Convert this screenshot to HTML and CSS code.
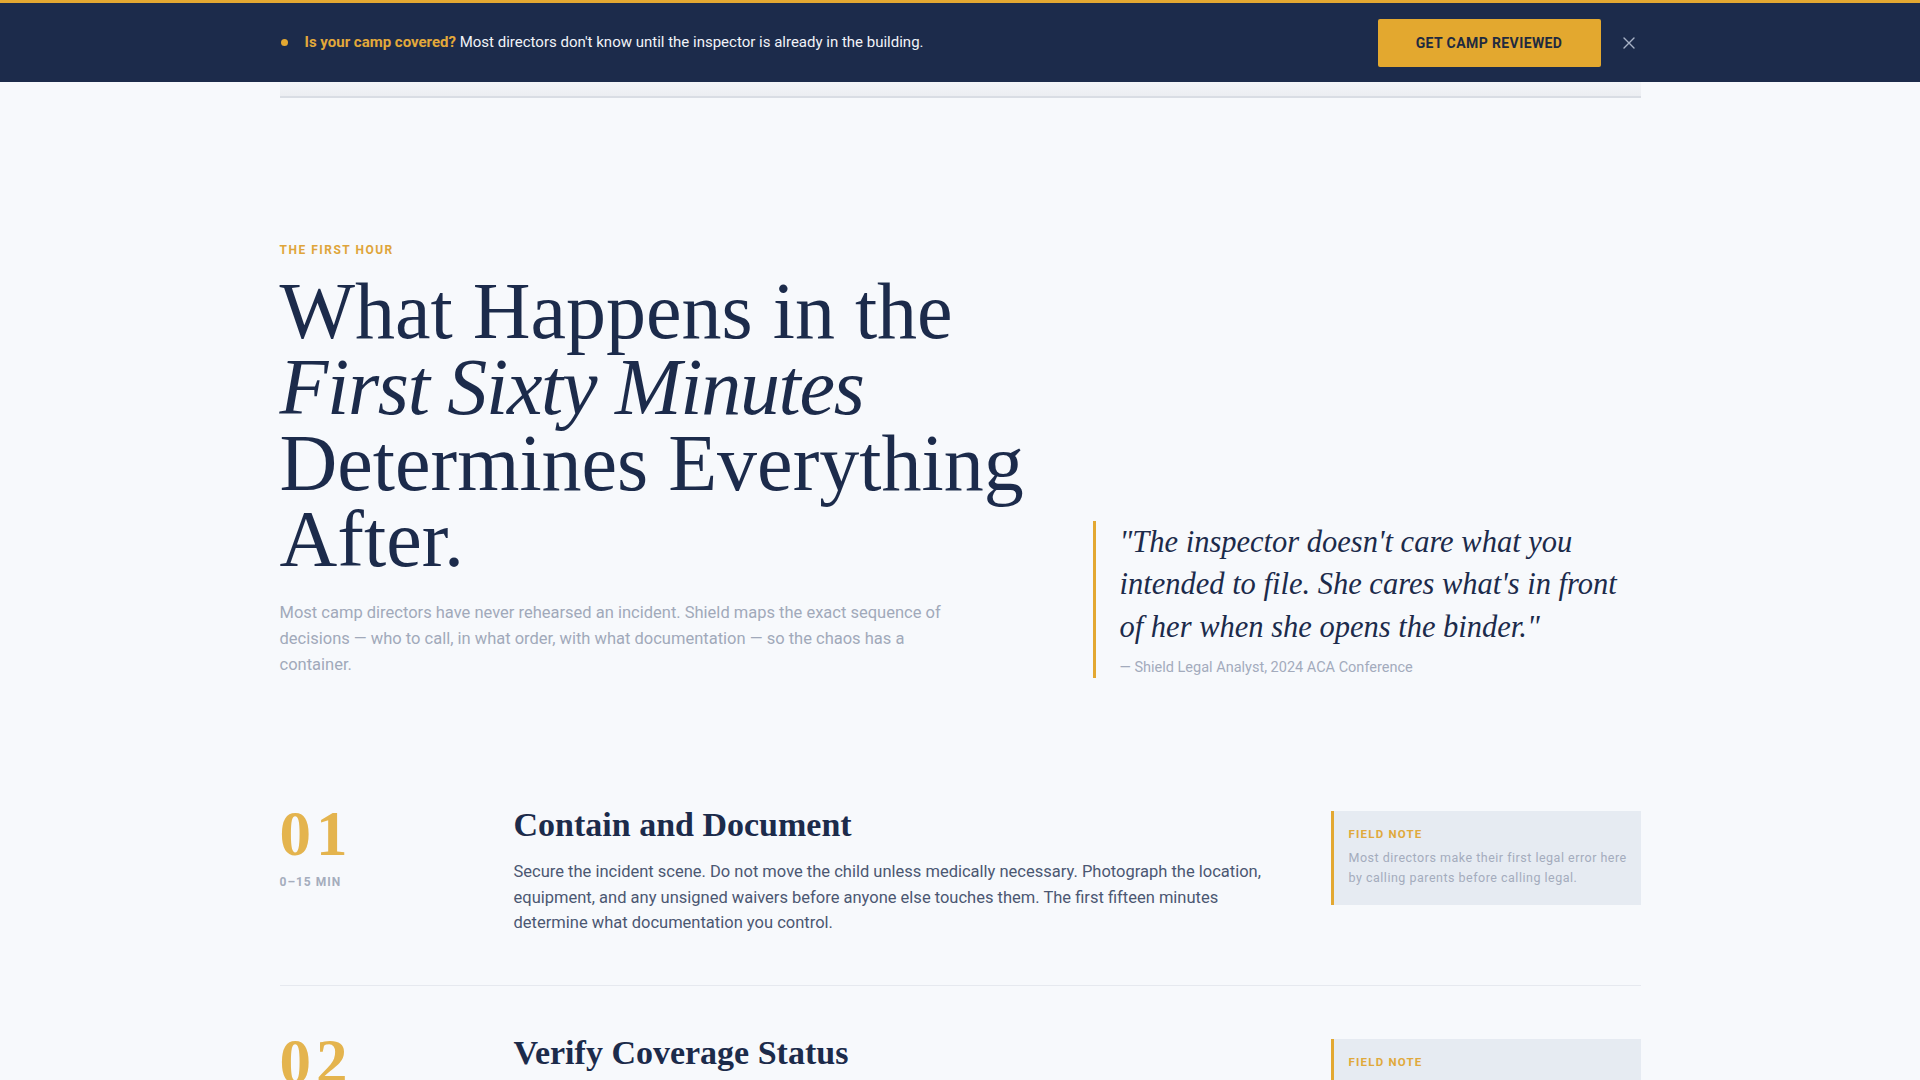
FILE: index.html
```html
<!DOCTYPE html>
<html lang="en">
<head>
<meta charset="utf-8">
<title>The First Hour — Shield</title>
<link rel="stylesheet" href="styles.css">
</head>
<body>
  <div class="announce">
    <div class="wrap announce-inner">
      <p class="announce-text"><span class="dot"></span><strong>Is your camp covered?</strong> Most directors don't know until the inspector is already in the building.</p>
      <div class="announce-actions">
        <a class="btn-gold" href="#">GET CAMP REVIEWED</a>
        <button class="close" type="button" aria-label="Dismiss">
          <svg viewBox="0 0 12 12" width="12" height="12" aria-hidden="true"><path d="M1 1 L11 11 M11 1 L1 11" stroke="currentColor" stroke-width="1.4" stroke-linecap="round" fill="none"/></svg>
        </button>
      </div>
    </div>
  </div>
  <div class="wrap nav-edge"></div>

  <main>
    <section class="wrap hero">
      <div class="hero-main">
        <p class="eyebrow">THE FIRST HOUR</p>
        <h1 class="hero-title"><span class="line">What Happens in the</span><span class="line"><em>First Sixty Minutes</em></span><span class="line">Determines Everything</span><span class="line">After.</span></h1>
        <p class="lede">Most camp directors have never rehearsed an incident. Shield maps the exact sequence of decisions — who to call, in what order, with what documentation — so the chaos has a container.</p>
      </div>
      <blockquote class="pull">
        <p class="pull-text">"The inspector doesn't care what you intended to file. She cares what's in front of her when she opens the binder."</p>
        <cite class="pull-cite">— Shield Legal Analyst, 2024 ACA Conference</cite>
      </blockquote>
    </section>

    <section class="wrap steps">
      <article class="step">
        <div class="step-num">
          <span class="num">01</span>
          <span class="time">0–15 MIN</span>
        </div>
        <div class="step-body">
          <h2 class="step-title">Contain and Document</h2>
          <p class="step-text">Secure the incident scene. Do not move the child unless medically necessary. Photograph the location, equipment, and any unsigned waivers before anyone else touches them. The first fifteen minutes determine what documentation you control.</p>
        </div>
        <aside class="note">
          <span class="note-label">FIELD NOTE</span>
          <p class="note-text">Most directors make their first legal error here by calling parents before calling legal.</p>
        </aside>
      </article>

      <article class="step">
        <div class="step-num">
          <span class="num">02</span>
          <span class="time">15–30 MIN</span>
        </div>
        <div class="step-body">
          <h2 class="step-title">Verify Coverage Status</h2>
          <p class="step-text">Pull the current certificate of insurance and confirm the policy period, the named insureds, and any activity exclusions. If the incident falls outside a listed activity, you need to know before the first phone call.</p>
        </div>
        <aside class="note">
          <span class="note-label">FIELD NOTE</span>
          <p class="note-text">Lapsed riders are the most common surprise. Check the endorsement page, not the summary.</p>
        </aside>
      </article>
    </section>
  </main>
</body>
</html>
```

FILE: styles.css
```css
* {
  box-sizing: border-box;
}

html,
body {
  margin: 0;
  padding: 0;
}

body {
  background: #f7f9fc;
  color: #1c2b4b;
  font-family: Roboto, "Noto Sans", Arial, sans-serif;
  -webkit-font-smoothing: antialiased;
}

.wrap {
  width: 1361px;
  margin: 0 auto;
}

/* ---------- announcement bar ---------- */
.announce {
  background: #1c2b4b;
  border-top: 3px solid #e3a832;
}

.announce-inner {
  height: 79px;
  display: flex;
  align-items: center;
  justify-content: space-between;
}

.announce-text {
  margin: 0 0 1px;
  display: flex;
  align-items: center;
  font-size: 15px;
  font-weight: 400;
  color: #f1f3f8;
  white-space: pre;
}

.announce-text strong {
  color: #e3a93a;
  font-weight: 700;
}

.dot {
  width: 7px;
  height: 7px;
  border-radius: 50%;
  background: #e3a832;
  margin: 0 17px 0 1px;
}

.announce-actions {
  display: flex;
  align-items: center;
}

.btn-gold {
  display: flex;
  align-items: center;
  justify-content: center;
  width: 223px;
  height: 48px;
  background: #e3a82f;
  border-radius: 2px;
  color: #1f2a3f;
  font-size: 14px;
  font-weight: 700;
  letter-spacing: 0.4px;
  text-decoration: none;
}

.close {
  width: 24px;
  height: 24px;
  margin-left: 16px;
  padding: 0;
  border: 0;
  background: none;
  color: #a8b2c6;
  display: flex;
  align-items: center;
  justify-content: center;
}

.nav-edge {
  height: 16px;
  background: linear-gradient(to bottom, #f3f5f8, #eceef2);
  border-bottom: 2px solid #d9dde4;
}

/* ---------- hero ---------- */
.hero {
  display: grid;
  grid-template-columns: minmax(0, 1fr) 548px;
  column-gap: 40px;
  align-items: end;
  padding: 144px 0 80px;
}

.eyebrow {
  margin: 0 0 15px;
  font-size: 12px;
  line-height: 16px;
  font-weight: 700;
  letter-spacing: 1.5px;
  color: #dfa53a;
}

.hero-title {
  margin: 0;
  font-family: "Liberation Serif", "Times New Roman", serif;
  font-weight: 400;
  font-size: 80px;
  color: #1c2b4b;
  white-space: nowrap;
}

/* each headline row gets a fixed 76px band */
.hero-title .line {
  display: block;
  height: 76px;
  line-height: 76px;
}

.hero-title em {
  font-style: italic;
  letter-spacing: -1.3px;
}

.lede {
  margin: 23px 0 0;
  max-width: 690px;
  font-size: 16.5px;
  line-height: 26px;
  color: #a1a9ba;
}

.pull {
  margin: 0;
  border-left: 3px solid #e3a832;
  padding: 0 0 0 24px;
}

.pull-text {
  margin: 0;
  font-family: "Liberation Serif", "Times New Roman", serif;
  font-style: italic;
  font-size: 30.5px;
  line-height: 42.5px;
  color: #1c2b4b;
}

.pull-cite {
  display: block;
  margin-top: 10px;
  font-style: normal;
  font-size: 14.5px;
  line-height: 20px;
  color: #a3abbc;
}

/* ---------- steps ---------- */
.step {
  display: grid;
  grid-template-columns: 180px minmax(0, 1fr) 310px;
  column-gap: 54px;
  padding: 45px 0 49px;
  border-bottom: 1px solid #e6e9ef;
}

.step-num {
  display: flex;
  flex-direction: column;
}

.num {
  font-family: "Liberation Serif", "Times New Roman", serif;
  font-weight: 700;
  font-size: 63px;
  line-height: 62px;
  letter-spacing: 5px;
  color: #e4b44e;
}

.time {
  margin-top: 9px;
  font-size: 12px;
  line-height: 16px;
  font-weight: 700;
  letter-spacing: 1px;
  color: #a5adbd;
}

.step-title {
  margin: 3px 0 0;
  font-family: "Liberation Serif", "Times New Roman", serif;
  font-weight: 700;
  font-size: 34px;
  line-height: 37px;
  color: #1c2b4b;
}

.step-text {
  margin: 16px 0 0;
  font-size: 16.5px;
  line-height: 25.6px;
  color: #4b5772;
}

.note {
  align-self: start;
  margin-top: 8px;
  background: #e6ebf2;
  border-left: 3px solid #e3a832;
  padding: 15px 12px 17px 15px;
}

.note-label {
  display: block;
  font-size: 11.5px;
  line-height: 16px;
  font-weight: 700;
  letter-spacing: 1.2px;
  color: #e0a93c;
}

.note-text {
  margin: 6px 0 0;
  font-size: 12.5px;
  line-height: 20px;
  letter-spacing: 0.5px;
  color: #a4acbd;
}
```
